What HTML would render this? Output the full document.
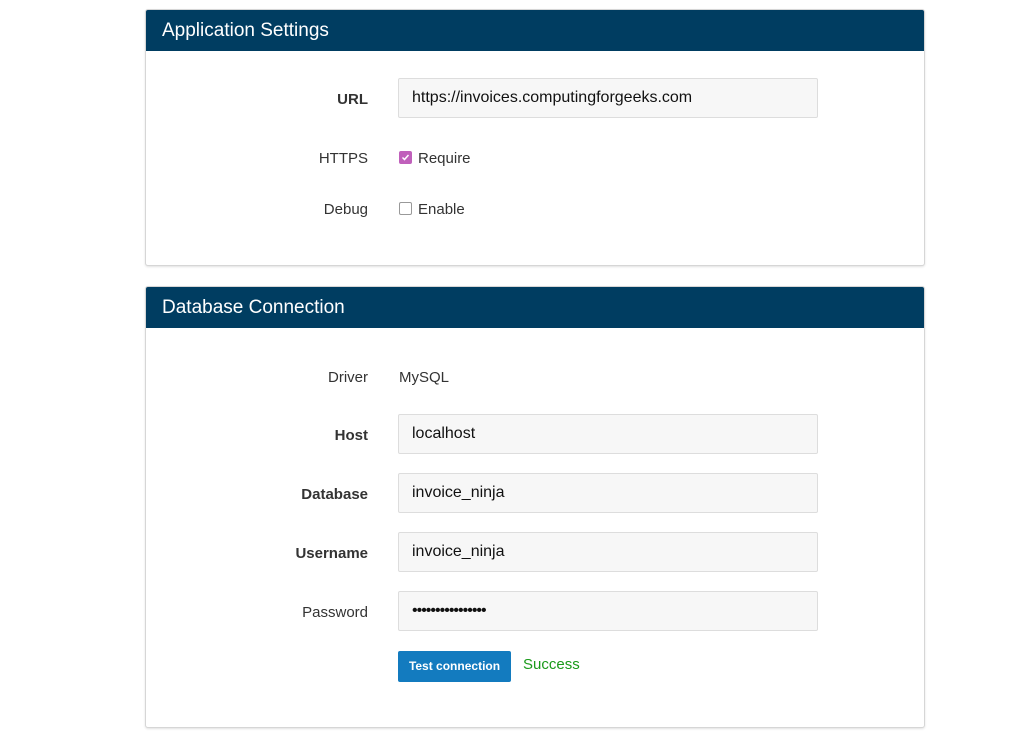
<!DOCTYPE html>
<html><head><style>
body{margin:0;background:#fff;font-family:"Liberation Sans",Arial,sans-serif;width:1024px;height:738px;overflow:hidden;position:relative;color:#333}
.panel{position:absolute;left:145px;width:778px;border:1px solid #d6d6d6;border-radius:3px;background:#fff;box-shadow:0 1px 2px rgba(0,0,0,.12)}
.hd{background:#003d61;color:#fff;font-size:19px;height:41px;line-height:41px;padding-left:16px;border-radius:2px 2px 0 0}
.lbl{position:absolute;right:556px;font-size:15px;color:#333;text-align:right}
.b{font-weight:bold}
.inp{position:absolute;left:252px;width:420px;height:40px;border:1px solid #ddd;border-radius:2px;background:#f7f7f7;box-sizing:border-box;font-size:16px;line-height:38px;padding-left:13px;color:#111}
.txt{position:absolute;left:253px;font-size:15px;color:#333}
.cb{display:inline-block;width:11px;height:11px;border:1px solid #999;border-radius:2px;vertical-align:-1px;margin-right:6px;background:#fff}
.cb.on{background:#c060bb;border-color:#c060bb;position:relative}
</style></head><body>
<div class="panel" style="top:9px;height:255px">
<div class="hd">Application Settings</div>
<div class="lbl b" style="top:81px">URL</div>
<div class="inp" style="top:68px">https://invoices.computingforgeeks.com</div>
<div class="lbl" style="top:140px">HTTPS</div>
<div class="txt" style="top:140px"><span class="cb on"><svg width="11" height="11" viewBox="0 0 11 11" style="position:absolute;left:0;top:0"><path d="M2.5 5.5l2 2 4-4.5" stroke="#fff" stroke-width="1.5" fill="none"/></svg></span>Require</div>
<div class="lbl" style="top:191px">Debug</div>
<div class="txt" style="top:191px"><span class="cb"></span>Enable</div>
</div>
<div class="panel" style="top:286px;height:440px">
<div class="hd">Database Connection</div>
<div class="lbl" style="top:82px">Driver</div>
<div class="txt" style="top:82px">MySQL</div>
<div class="lbl b" style="top:140px">Host</div>
<div class="inp" style="top:127px">localhost</div>
<div class="lbl b" style="top:199px">Database</div>
<div class="inp" style="top:186px">invoice_ninja</div>
<div class="lbl b" style="top:258px">Username</div>
<div class="inp" style="top:245px">invoice_ninja</div>
<div class="lbl" style="top:317px">Password</div>
<div class="inp" style="top:304px;letter-spacing:-1px">••••••••••••••••</div>
<div style="position:absolute;left:252px;top:364px;width:113px;height:31px;background:#137bbf;border-radius:2px;color:#fff;font-size:12px;font-weight:bold;line-height:31px;text-align:center">Test connection</div>
<div style="position:absolute;left:377px;top:369px;font-size:15px;color:#1a9a1a">Success</div>
</div>
</body></html>
